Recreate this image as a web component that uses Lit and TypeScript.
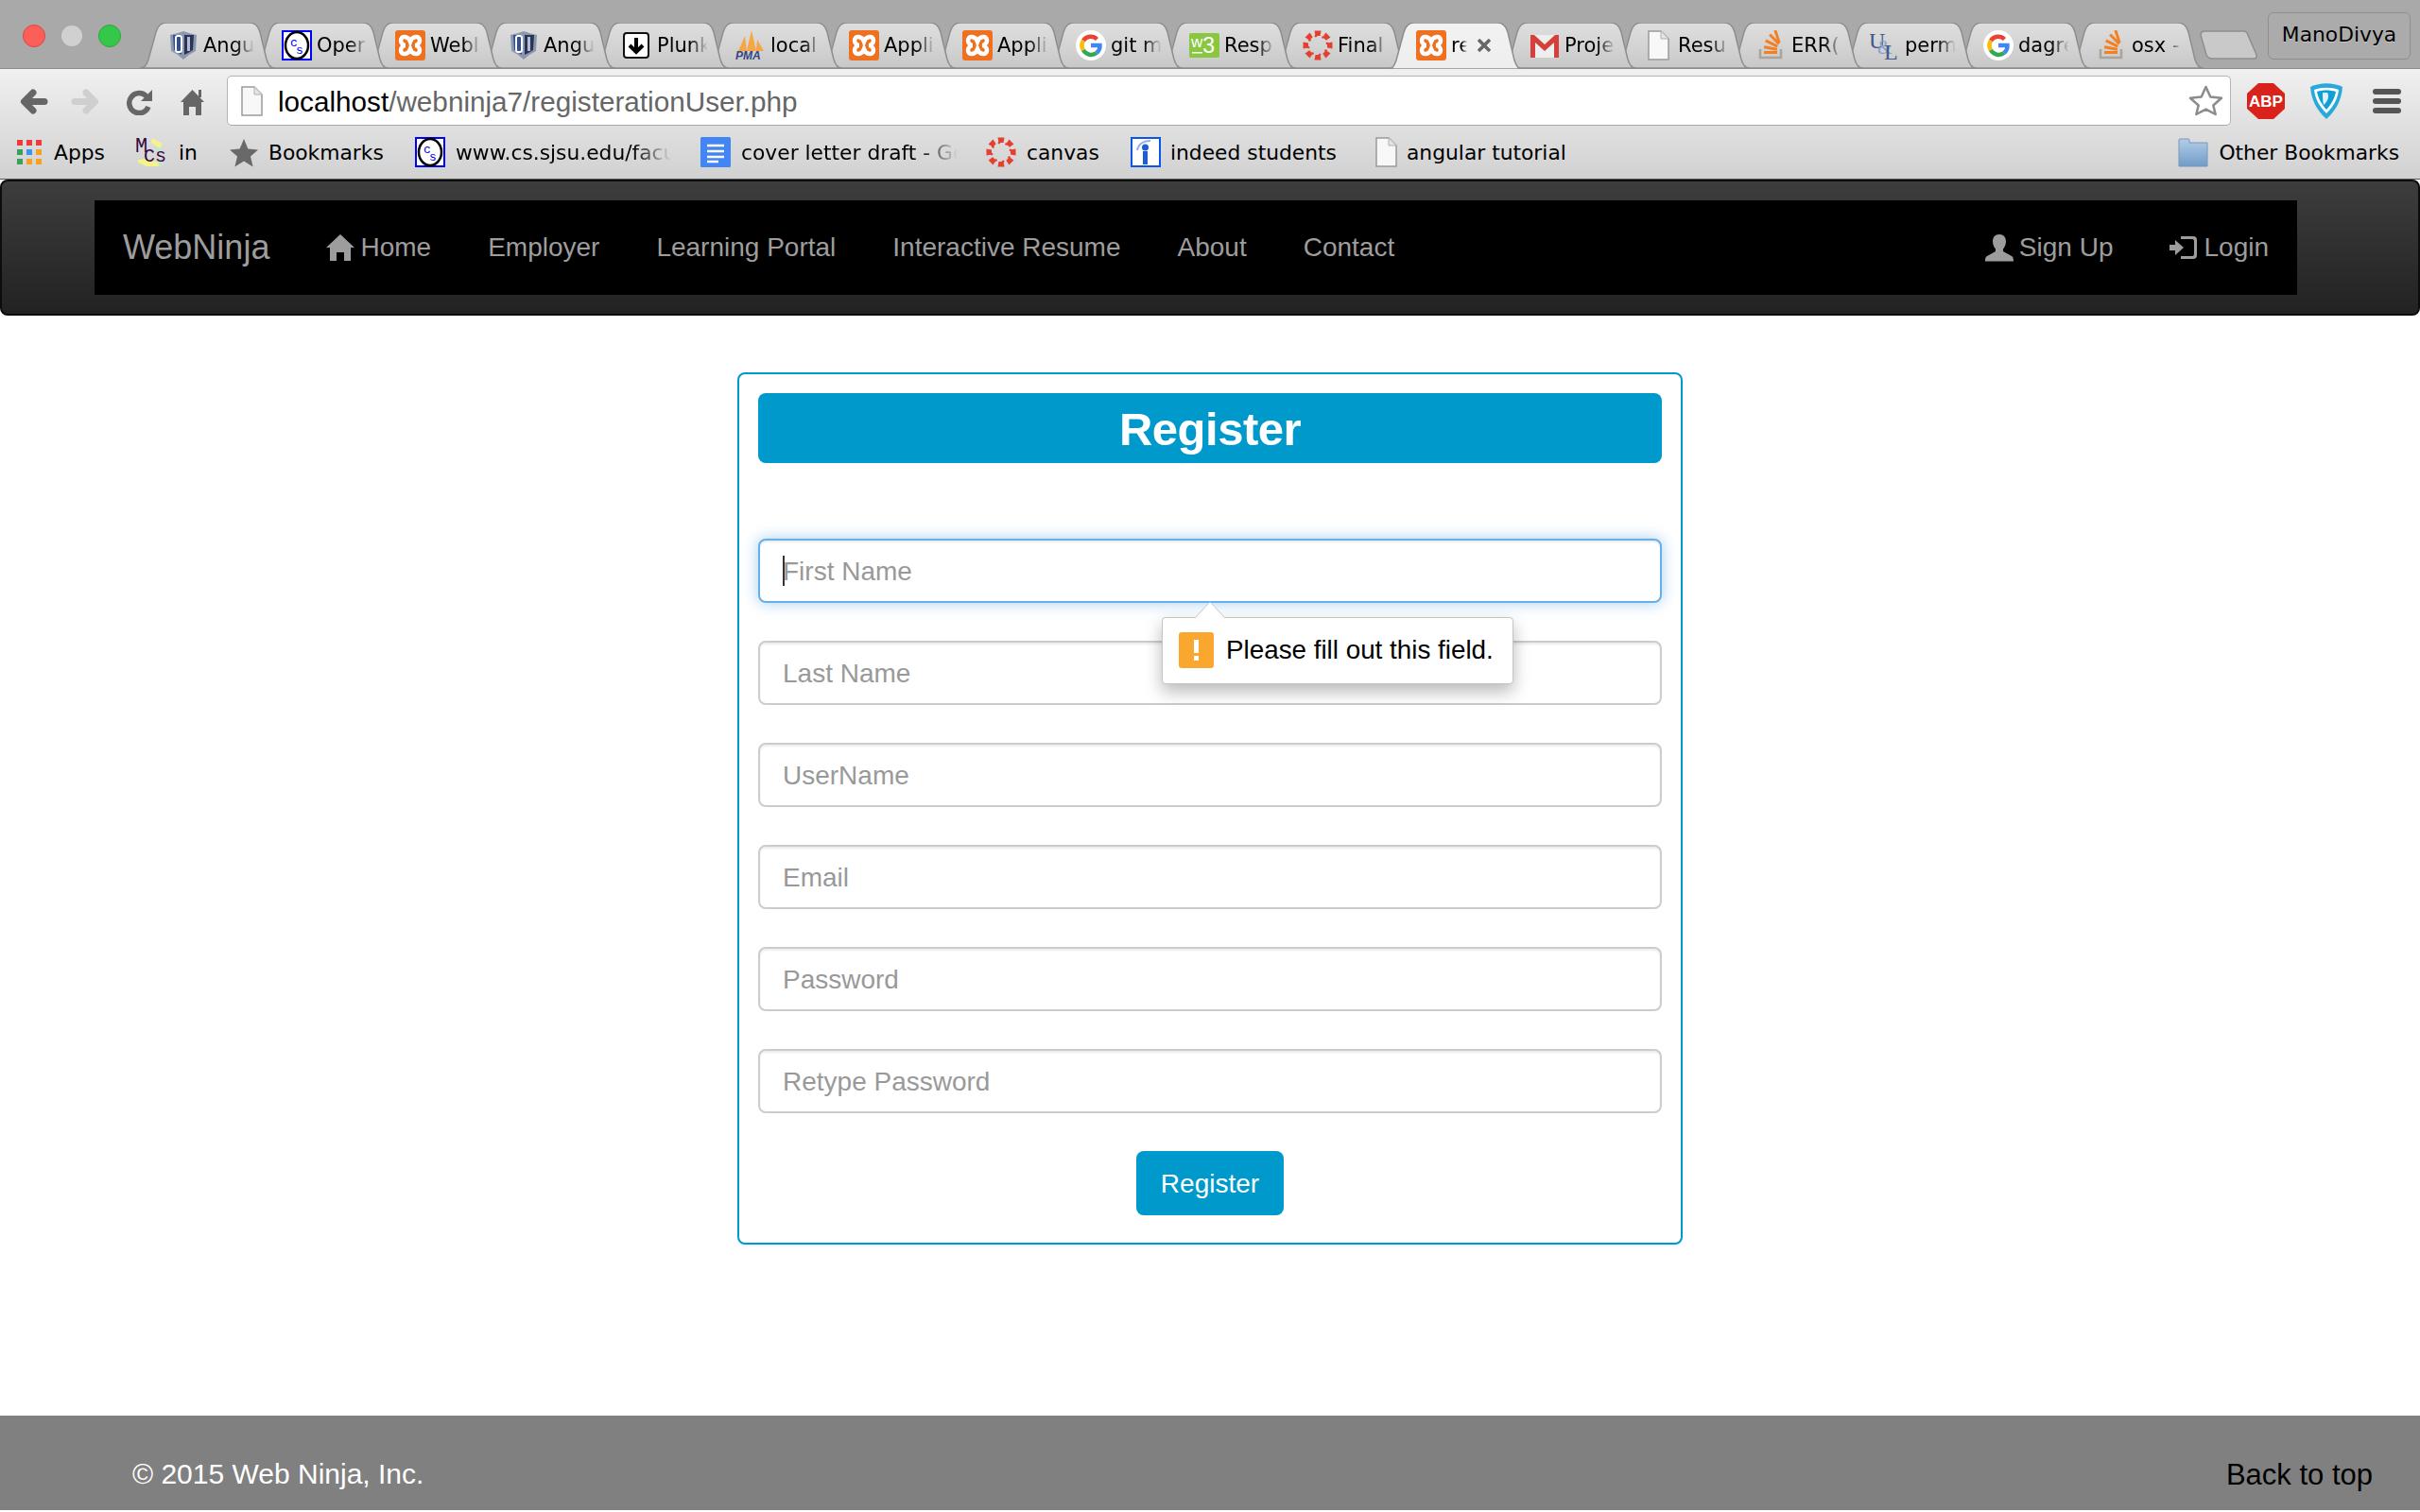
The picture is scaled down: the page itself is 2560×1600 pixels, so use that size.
import { LitElement, html, svg, css } from "lit";
import { customElement } from "lit/decorators.js";

const range = (n: number) => Array.from({ length: n }, (_, i) => i);

const favicons: Record<string, unknown> = {
  ui: html`<svg class="fav" viewBox="0 0 32 32">
    <path d="M2 5l8-2 6-2 6 2 8 2-1 17-7 4-6 5-6-5-7-4z" fill="#8d97ad" />
    <path d="M5 5h9v21l-3-2-5-3z" fill="#2f4f96" />
    <path d="M17 5h10l-1 16-5 3-4 2z" fill="#27355c" />
    <rect x="8" y="6" width="6" height="17" rx="2" fill="none" stroke="#fff" stroke-width="2" />
    <rect x="20" y="7" width="3" height="15" fill="#b6bccb" />
  </svg>`,
  cs: html`<svg class="fav" viewBox="0 0 32 32">
    <rect x="1" y="1" width="30" height="30" fill="#fff" stroke="#00f" stroke-width="2" />
    <ellipse cx="16" cy="16" rx="12" ry="14" fill="#fff" stroke="#000" stroke-width="2.5" />
    <text x="9" y="17" font-size="13" fill="#00f" font-family="Liberation Mono">c</text>
    <text x="15" y="25" font-size="13" fill="#00f" font-family="Liberation Mono">s</text>
  </svg>`,
  xampp: html`<svg class="fav" viewBox="0 0 32 32">
    <rect width="32" height="32" rx="3" fill="#ef7120" />
    <path d="M16 12C14 6 6 5 6 11c0 3 3 5 5 5-2 0-5 2-5 5 0 6 8 5 10-1 2 6 10 7 10 1 0-3-3-5-5-5 2 0 5-2 5-5 0-6-8-5-10 1z" fill="none" stroke="#fff" stroke-width="4.500" />
  </svg>`,
  plunk: html`<svg class="fav" viewBox="0 0 32 32">
    <rect x="2" y="3" width="26" height="26" rx="3" fill="#fff" stroke="#111" stroke-width="2" />
    <path d="M15 8v15M8 16l7 7 7-7" fill="none" stroke="#000" stroke-width="4" />
  </svg>`,
  pma: html`<svg class="fav" viewBox="0 0 32 32">
    <path d="M3 22L10 6l2 16zM12 22L17 0l5 22zM22 22l1-12 7 12z" fill="#f7a645" />
    <text x="0" y="31" font-size="12" font-weight="700" font-style="italic" fill="#34457f" font-family="Liberation Sans">PMA</text>
  </svg>`,
  google: html`<svg class="fav" viewBox="0 0 32 32">
    <circle cx="16" cy="16" r="16" fill="#fff" />
    <path d="M22.5 9.5A9.5 9.5 0 0 0 8 11" fill="none" stroke="#ea4335" stroke-width="4.5" />
    <path d="M8 11a9.5 9.5 0 0 0 0 10" fill="none" stroke="#fbbc05" stroke-width="4.5" />
    <path d="M8 21a9.5 9.5 0 0 0 14 3" fill="none" stroke="#34a853" stroke-width="4.5" />
    <path d="M22 24a9.5 9.5 0 0 0 3.5-8H16" fill="none" stroke="#4285f4" stroke-width="4.5" />
  </svg>`,
  w3: html`<svg class="fav" viewBox="0 0 32 32">
    <rect y="3" width="32" height="26" rx="2" fill="#8ac640" />
    <text x="2" y="18" fill="#fff" font-family="Liberation Sans"><tspan font-size="17">w</tspan><tspan font-size="23" dy="6">3</tspan></text>
    <rect x="3" y="23" width="11" height="1.5" fill="#fff" />
  </svg>`,
  canvas: html`<svg class="fav" viewBox="0 0 32 32">
    ${range(8).map(
      (i) => svg`<g transform="rotate(${i * 45} 16 16)" fill="#e5402f">
        <path d="M12.500 0.500h7l-1 5.500h-5z" />
        <circle cx="21.500" cy="7.500" r="1.300" />
      </g>`,
    )}
  </svg>`,
  gmail: html`<svg class="fav" viewBox="0 0 32 32">
    <rect x="1" y="5" width="30" height="24" fill="#eee" />
    <path d="M1 29V5h4l11 10L27 5h4v24h-5V13l-10 9-10-9v16z" fill="#d5403a" />
  </svg>`,
  doc: html`<svg class="fav" viewBox="0 0 32 32">
    <path d="M6 1h13l8 8v22H6z" fill="#f8f8f8" stroke="#9a9a9a" stroke-width="1.5" />
    <path d="M19 1v8h8" fill="#e4e4e4" stroke="#b0b0b0" />
  </svg>`,
  stack: html`<svg class="fav" viewBox="0 0 32 32">
    <path d="M4 20v9h22v-9" fill="none" stroke="#a9a49d" stroke-width="2.5" />
    <g fill="#f48024">
      <rect x="8" y="22" width="14" height="3" />
      <rect x="8" y="17.5" width="14" height="3" transform="rotate(10 15 19)" />
      <rect x="9" y="12.5" width="14" height="3" transform="rotate(27 16 14)" />
      <rect x="12" y="8" width="14" height="3" transform="rotate(46 19 9.5)" />
      <rect x="15" y="5" width="14" height="3" transform="rotate(72 22 6.5)" />
    </g>
  </svg>`,
  ul: html`<svg class="fav" viewBox="0 0 32 32">
    <text x="-1" y="19" font-size="24" fill="#41598c" font-family="Liberation Serif">U</text>
    <text x="8" y="25" font-size="20" fill="#8aa0cc" font-family="Liberation Serif">&amp;</text>
    <text x="15" y="31" font-size="24" fill="#41598c" font-family="Liberation Serif">L</text>
  </svg>`,
  apps: html`<svg class="fav" viewBox="0 0 32 32">
    ${["#ee3b3b", "#ee3b3b", "#ee3b3b", "#3c9f5c", "#3a94f0", "#f4a124", "#3c9f5c", "#f4a124", "#f4a124"].map(
      (c, i) => svg`<rect x=${3 + (i % 3) * 10} y=${3 + Math.floor(i / 3) * 10} width="6" height="6" fill=${c} />`,
    )}
  </svg>`,
  mcs: html`<svg class="fav" viewBox="0 0 32 32">
    <path d="M18 1l11 6-3 5-9-6zM3 24l9-1 14 4v4H12l-9-4z" fill="#f4f38e" />
    <path d="M20 10l8 2-3 3zM24 26l6 3-5 2z" fill="#b6eec8" />
    <text x="0" y="16" font-size="22" fill="#35083f" font-family="Liberation Mono">M</text>
    <text x="9" y="26" font-size="20" fill="#35083f" font-family="Liberation Mono">Cs</text>
  </svg>`,
  star: html`<svg class="fav" viewBox="0 0 32 32">
    <path d="M16 2l4.400 10.600 10.600.8-8 7.200 2.600 11L16 25.600l-9.600 6 2.600-11-8-7.200 10.600-.8z" fill="#696969" />
  </svg>`,
  gdoc: html`<svg class="fav" viewBox="0 0 32 32">
    <rect width="32" height="32" rx="1.500" fill="#4285f4" />
    <path d="M7 9h18M7 15h18M7 21h18M7 26h12" stroke="#fff" stroke-width="2.500" />
  </svg>`,
  indeed: html`<svg class="fav" viewBox="0 0 32 32">
    <rect x="1" y="1" width="30" height="30" fill="#fff" stroke="#0b56e8" stroke-width="2" />
    <path d="M7 14C8 8 13 4 21 4" fill="none" stroke="#8fb0ea" stroke-width="2" />
    <circle cx="15.500" cy="11" r="3.500" fill="#1a5fd6" />
    <rect x="13" y="15" width="5" height="14" fill="#1a5fd6" />
  </svg>`,
  folder: html`<svg class="fav" viewBox="0 0 32 32">
    <defs>
      <linearGradient id="folderBg" x1="0" y1="0" x2="0" y2="1">
        <stop offset="0" stop-color="#b4cde8" />
        <stop offset="1" stop-color="#6f9cc9" />
      </linearGradient>
    </defs>
    <path d="M1 31V3q0-1 1-1h9q1 0 1 1v3h19v25z" fill="url(#folderBg)" stroke="#7b97b5" />
  </svg>`,
};

const tabs = [
  ["ui", "Angu"],
  ["cs", "Oper"],
  ["xampp", "Webl"],
  ["ui", "Angu"],
  ["plunk", "Plunk"],
  ["pma", "local"],
  ["xampp", "Appli"],
  ["xampp", "Appli"],
  ["google", "git m"],
  ["w3", "Resp"],
  ["canvas", "Final"],
  ["xampp", "re"],
  ["gmail", "Proje"],
  ["doc", "Resu"],
  ["stack", "ERR("],
  ["ul", "perm"],
  ["google", "dagre"],
  ["stack", "osx -"],
];
const activeTab = 11;

// step = distance from this icon to the next one
const bookmarks = [
  { icon: "apps", label: "Apps", step: 128, gap: 10, fade: 0 },
  { icon: "mcs", label: "in", step: 99, gap: 14, fade: 0 },
  { icon: "star", label: "Bookmarks", step: 197, gap: 10, fade: 0 },
  { icon: "cs", label: "www.cs.sjsu.edu/faculty", step: 302, gap: 11, fade: 228 },
  { icon: "gdoc", label: "cover letter draft - Google", step: 302, gap: 11, fade: 229 },
  { icon: "canvas", label: "canvas", step: 153, gap: 11, fade: 0 },
  { icon: "indeed", label: "indeed students", step: 254, gap: 10, fade: 0 },
  { icon: "doc", label: "angular tutorial", step: 300, gap: 6, fade: 0 },
];

const navLinks = ["Employer", "Learning Portal", "Interactive Resume", "About", "Contact"];
const fields = ["Last Name", "UserName", "Email", "Password", "Retype Password"];

@customElement("app-root")
export class AppRoot extends LitElement {
  static styles = css`
    :host {
      display: flex;
      flex-direction: column;
      height: 1600px;
      background: #fff;
      font-family: "Liberation Sans", Arial, sans-serif;
      overflow: hidden;
    }

    /* browser chrome */
    .strip {
      display: flex;
      align-items: flex-end;
      box-sizing: border-box;
      height: 73px;
      padding-left: 24px;
      background: #a9a9a9;
      border-bottom: 1px solid #8c8c8c;
      font-family: "DejaVu Sans", sans-serif;
      font-size: 21px;
      color: #000;
    }
    .lights {
      display: flex;
      align-items: center;
      gap: 17px;
      width: 124px;
      align-self: flex-start;
      margin-top: 26px;
    }
    .light {
      width: 24px;
      height: 24px;
      border-radius: 50%;
      box-sizing: border-box;
    }
    .light.red {
      background: #fc5f5a;
      border: 1px solid #e0443e;
    }
    .light.grey {
      width: 22px;
      height: 22px;
      background: #d0d0d0;
    }
    .light.green {
      background: #34c84a;
      border: 1px solid #2aa73c;
    }
    .tab {
      position: relative;
      display: flex;
      align-items: center;
      box-sizing: border-box;
      flex: none;
      width: 143px;
      height: 48px;
      margin-right: -23px;
      padding-left: 30px;
    }
    .tab.active {
      height: 49px;
      margin-bottom: -1px;
      padding-bottom: 1px;
    }
    .tab-shape {
      position: absolute;
      left: 0;
      top: 0;
      width: 143px;
      height: 100%;
    }
    .fav {
      position: relative;
      flex: none;
      width: 32px;
      height: 32px;
    }
    .tab-label {
      position: relative;
      flex: none;
      width: 56px;
      margin-left: 5px;
      overflow: hidden;
      white-space: nowrap;
      -webkit-mask-image: linear-gradient(to right, #000 62%, transparent 96%);
      mask-image: linear-gradient(to right, #000 62%, transparent 96%);
    }
    .active .tab-label {
      width: 18px;
    }
    .tab-close {
      position: relative;
      width: 14px;
      height: 14px;
      margin-left: 10px;
    }
    .new-tab {
      flex: none;
      width: 62px;
      height: 31px;
      margin: 0 0 9px 19px;
    }
    .profile {
      flex: none;
      align-self: flex-start;
      display: flex;
      align-items: center;
      justify-content: center;
      box-sizing: border-box;
      width: 151px;
      height: 50px;
      margin: 13px 10px 0 auto;
      padding-bottom: 4px;
      background: #ababab;
      border: 1px solid #8f8f8f;
      border-radius: 6px;
      font-size: 21.8px;
      text-shadow: 0 1px 0 rgba(255, 255, 255, 0.35);
    }
    .toolbar {
      background: linear-gradient(#f0f0f0, #d1d1d1);
      border-bottom: 1px solid #555;
    }
    .nav-row {
      display: flex;
      align-items: flex-end;
      height: 60px;
      padding-left: 20px;
    }
    .tool {
      flex: none;
      align-self: flex-start;
      margin-top: 21px;
    }
    .back {
      width: 31px;
      height: 27px;
      margin-right: 24px;
    }
    .forward {
      width: 31px;
      height: 27px;
      margin-right: 28px;
    }
    .reload {
      width: 27px;
      height: 28px;
      margin-right: 30px;
    }
    .home {
      width: 25px;
      height: 28px;
      margin-right: 24px;
    }
    .omnibox {
      display: flex;
      align-items: center;
      box-sizing: border-box;
      flex: none;
      width: 2120px;
      height: 53px;
      padding: 0 7px 0 16px;
      background: #fff;
      border: 1px solid #b4b4b4;
      border-bottom-color: #a8a8a8;
      border-radius: 5px;
    }
    .omnibox .fav {
      margin-left: -7px;
    }
    .url {
      margin-left: 12px;
      padding-top: 2px;
      font-size: 29.7px;
      color: #666;
      white-space: nowrap;
    }
    .url b {
      font-weight: 400;
      color: #000;
    }
    .bm-star {
      width: 37px;
      height: 33px;
      margin-left: auto;
    }
    .abp {
      flex: none;
      width: 40px;
      height: 38px;
      margin: 0 0 7px 17px;
    }
    .shield {
      flex: none;
      width: 34px;
      height: 38px;
      margin: 0 0 7px 27px;
    }
    .menu {
      flex: none;
      display: flex;
      flex-direction: column;
      gap: 4px;
      width: 30px;
      margin: 0 0 13px 32px;
    }
    .menu span {
      height: 6px;
      background: #555;
      border-radius: 3px;
    }
    .bookmarks {
      display: flex;
      align-items: center;
      height: 56px;
      padding-left: 15px;
      font-family: "DejaVu Sans", sans-serif;
      font-size: 21.8px;
      color: #000;
    }
    .bm {
      display: flex;
      align-items: center;
      flex: none;
      white-space: nowrap;
    }
    .bm-label {
      overflow: hidden;
    }
    .bm-label.fade {
      -webkit-mask-image: linear-gradient(to right, #000 82%, transparent);
      mask-image: linear-gradient(to right, #000 82%, transparent);
    }
    .other {
      display: flex;
      align-items: center;
      gap: 11px;
      margin-left: auto;
      padding-right: 22px;
      white-space: nowrap;
    }

    /* site navbar */
    .navbar {
      box-sizing: border-box;
      height: 144px;
      padding: 20px 128px 20px 98px;
      background: linear-gradient(#3d3d3d, #222);
      border: 2px solid #0c0c0c;
      border-radius: 8px;
    }
    .nav-inner {
      display: flex;
      align-items: center;
      height: 100px;
      background: #000;
      color: #9d9d9d;
      font-size: 28px;
    }
    .brand {
      padding: 0 30px;
      font-size: 36px;
    }
    .nav-link {
      display: flex;
      align-items: center;
      gap: 6px;
      padding: 0 30px;
      white-space: nowrap;
    }
    .nav-link svg {
      flex: none;
      width: 30px;
      height: 30px;
      fill: #9d9d9d;
    }
    .nav-right {
      display: flex;
      margin-left: auto;
    }

    /* register form */
    main {
      flex: 1;
      padding-top: 60px;
    }
    .card {
      box-sizing: border-box;
      width: 1000px;
      margin: 0 auto;
      padding: 20px 20px 29px;
      border: 2px solid #0099cc;
      border-radius: 8px;
      box-shadow: 0 2px 2px rgba(0, 0, 0, 0.05);
    }
    .card h1 {
      box-sizing: border-box;
      height: 74px;
      margin: 0 0 80px;
      padding-top: 2px;
      background: #0099cc;
      border-radius: 8px;
      color: #fff;
      font-size: 49px;
      font-weight: 700;
      line-height: 72px;
      text-align: center;
      letter-spacing: -0.5px;
    }
    form {
      display: flex;
      flex-direction: column;
      gap: 40px;
    }
    .field {
      position: relative;
    }
    input {
      display: block;
      box-sizing: border-box;
      width: 100%;
      height: 68px;
      padding: 2px 24px 0;
      background: #fff;
      border: 2px solid #ccc;
      border-radius: 8px;
      box-shadow: inset 0 2px 2px rgba(0, 0, 0, 0.075);
      font: 28px "Liberation Sans", Arial, sans-serif;
      outline: none;
    }
    input::placeholder {
      color: #999;
      opacity: 1;
    }
    input.focused {
      border-color: #66afe9;
      box-shadow: inset 0 2px 2px rgba(0, 0, 0, 0.075), 0 0 16px rgba(102, 175, 233, 0.6);
    }
    .caret {
      position: absolute;
      left: 26px;
      top: 18px;
      width: 1.500px;
      height: 32px;
      background: #333;
    }
    .tooltip {
      position: absolute;
      z-index: 2;
      left: 427px;
      top: 83px;
      display: flex;
      align-items: center;
      gap: 13px;
      box-sizing: border-box;
      width: 372px;
      height: 71px;
      padding: 0 0 1px 17px;
      background: #fff;
      border: 1px solid #c4c4c4;
      border-radius: 4px;
      box-shadow: 0 8px 18px rgba(0, 0, 0, 0.28);
      color: #000;
      font-size: 27.8px;
      white-space: nowrap;
    }
    .tip-arrow {
      position: absolute;
      left: 34px;
      top: -17px;
      width: 32px;
      height: 17px;
    }
    .tip-icon {
      display: flex;
      flex-direction: column;
      align-items: center;
      justify-content: center;
      gap: 3px;
      flex: none;
      width: 37px;
      height: 38px;
      background: #f9a72e;
      border-radius: 3px;
    }
    .tip-icon i {
      width: 5px;
      height: 14px;
      background: #fff;
    }
    .tip-icon i + i {
      height: 5px;
    }
    .submit {
      align-self: center;
      width: 156px;
      height: 68px;
      padding: 2px 0 0;
      background: #0099cc;
      border: 0;
      border-radius: 8px;
      color: #fff;
      font: 28px "Liberation Sans", Arial, sans-serif;
    }

    footer {
      display: flex;
      justify-content: space-between;
      box-sizing: border-box;
      height: 100px;
      margin-bottom: 2px;
      padding: 45px 50px 0 140px;
      background: #808080;
      color: #fff;
      font-size: 30px;
    }
    .to-top {
      color: #000;
      font-size: 31px;
    }
  `;

  private renderTab([icon, label]: string[], i: number) {
    const active = i === activeTab;
    return html`<div class="tab ${active ? "active" : ""}" style="z-index:${active ? 50 : 30 - i}">
      <svg class="tab-shape" viewBox="0 0 143 48" preserveAspectRatio="none">
        <defs>
          <linearGradient id="tabBg" x1="0" y1="0" x2="0" y2="1">
            <stop offset="0" stop-color="#dfdfdf" />
            <stop offset="1" stop-color="#c8c8c8" />
          </linearGradient>
          <linearGradient id="tabActive" x1="0" y1="0" x2="0" y2="1">
            <stop offset="0" stop-color="#f2f2f2" />
            <stop offset="1" stop-color="#eeeeee" />
          </linearGradient>
        </defs>
        <path
          d="M0 48c5 0 7-3 9-9l8-29c2-7 5-10 11-10h88c6 0 9 3 11 10l7 29c2 6 4 9 9 9z"
          fill="url(#${active ? "tabActive" : "tabBg"})"
          stroke="#8e8e8e"
          stroke-width="1.500"
        />
      </svg>
      ${favicons[icon]}
      <span class="tab-label">${label}</span>
      ${active
        ? html`<svg class="tab-close" viewBox="0 0 14 14">
            <path d="M1 1l12 12M13 1L1 13" stroke="#666" stroke-width="3.500" />
          </svg>`
        : ""}
    </div>`;
  }

  render() {
    return html`
      <div class="strip">
        <div class="lights">
          <span class="light red"></span><span class="light grey"></span><span class="light green"></span>
        </div>
        ${tabs.map((t, i) => this.renderTab(t, i))}
        <svg class="new-tab" viewBox="0 0 62 31">
          <path d="M1 5q0-4 4-4h41q4 0 5 4l9 21q1 4-3 4H13q-4 0-6-4z" fill="#c9c9c9" stroke="#8e8e8e" stroke-width="1.500" />
        </svg>
        <div class="profile">ManoDivya</div>
      </div>

      <div class="toolbar">
        <div class="nav-row">
          <svg class="tool back" viewBox="0 0 31 27">
            <path d="M27 13.500H6M15 4l-9.500 9.500L15 23" fill="none" stroke="#666" stroke-width="7" stroke-linecap="round" stroke-linejoin="round" />
          </svg>
          <svg class="tool forward" viewBox="0 0 31 27">
            <path d="M4 13.500h21M16 4l9.500 9.500L16 23" fill="none" stroke="#cfcfcf" stroke-width="7" stroke-linecap="round" stroke-linejoin="round" />
          </svg>
          <svg class="tool reload" viewBox="0 0 27 28">
            <path d="M21 8a10.500 10.500 0 1 0 2 11" fill="none" stroke="#666" stroke-width="5.500" />
            <path d="M27 1v12H15z" fill="#666" />
          </svg>
          <svg class="tool home" viewBox="0 0 25 28">
            <path d="M12.500 1L25 14h-3v14h-6v-9H9v9H3V14H0z" fill="#666" />
            <rect x="19" y="1" width="3" height="8" fill="#666" />
          </svg>
          <div class="omnibox">
            ${favicons.doc}
            <span class="url"><b>localhost</b>/webninja7/registerationUser.php</span>
            <svg class="bm-star" viewBox="0 0 37 33">
              <path d="M18.500 2l4.800 10.500 11.700 1.300-8.700 7.700 2.400 9.500-10.200-5.300L8.300 31l2.400-9.500L2 13.800l11.700-1.300z" fill="#fff" stroke="#8c8c8c" stroke-width="2.500" stroke-linejoin="round" />
            </svg>
          </div>
          <svg class="abp" viewBox="0 0 40 38">
            <path d="M12 0h16l12 11v16L28 38H12L0 27V11z" fill="#d9231a" />
            <text x="20" y="25" text-anchor="middle" font-size="17" font-weight="700" fill="#fff" font-family="Liberation Sans">ABP</text>
          </svg>
          <svg class="shield" viewBox="0 0 34 38">
            <path d="M17 38C6 28 1 17 0 4c11-5 23-5 34 0-1 13-6 24-17 34z" fill="#29a8dc" />
            <path d="M17 32C9 24 5 16 4 7c8-3 18-3 26 0-1 9-5 17-13 25z" fill="#fff" />
            <path d="M17 28C11 21 8 15 7 9c6-2 14-2 20 0-1 6-4 12-10 19z" fill="#0f9fd8" />
            <path d="M13 10h5c2 3 1 9-4 13-1-4-1-9-1-13z" fill="#dff2fa" />
          </svg>
          <div class="menu"><span></span><span></span><span></span></div>
        </div>
        <div class="bookmarks">
          ${bookmarks.map(
            (b) => html`<div class="bm" style="width:${b.step}px">
              ${favicons[b.icon]}
              <span
                class="bm-label ${b.fade ? "fade" : ""}"
                style="margin-left:${b.gap}px;${b.fade ? `width:${b.fade}px` : ""}"
                >${b.label}</span
              >
            </div>`,
          )}
          <div class="other">${favicons.folder}<span>Other Bookmarks</span></div>
        </div>
      </div>

      <nav class="navbar">
        <div class="nav-inner">
          <span class="brand">WebNinja</span>
          <span class="nav-link">
            <svg viewBox="0 0 30 30"><path d="M15 1L30 15h-4v14h-7v-9h-8v9H4V15H0z" /></svg>Home
          </span>
          ${navLinks.map((l) => html`<span class="nav-link">${l}</span>`)}
          <div class="nav-right">
            <span class="nav-link">
              <svg viewBox="0 0 30 30">
                <path d="M15 1c4.500 0 7 3 7 7.500 0 3.500-1.500 6-3 8v2.500l9 5c1 .6 2 1.500 2 5.500H0c0-4 1-5 2-5.500l9-5v-2.500c-1.500-2-3-4.500-3-8C8 4 10.500 1 15 1z" />
              </svg>Sign Up
            </span>
            <span class="nav-link">
              <svg viewBox="0 0 30 30">
                <path d="M0 12h6V7l9 8-9 8v-5H0z" />
                <path d="M12 3h13q4 0 4 4v16q0 4-4 4H12v-3h12q2 0 2-2V8q0-2-2-2H12z" />
              </svg>Login
            </span>
          </div>
        </div>
      </nav>

      <main>
        <section class="card">
          <h1>Register</h1>
          <form @submit=${(e: Event) => e.preventDefault()}>
            <div class="field">
              <input class="focused" placeholder="First Name" />
              <span class="caret"></span>
              <div class="tooltip">
                <svg class="tip-arrow" viewBox="0 0 32 17">
                  <path d="M0 17L16 0l16 17" fill="#fff" stroke="#c4c4c4" />
                </svg>
                <span class="tip-icon"><i></i><i></i></span>
                Please fill out this field.
              </div>
            </div>
            ${fields.map((f) => html`<div class="field"><input placeholder=${f} /></div>`)}
            <button class="submit">Register</button>
          </form>
        </section>
      </main>

      <footer>
        <span>© 2015 Web Ninja, Inc.</span>
        <span class="to-top">Back to top</span>
      </footer>
    `;
  }
}
